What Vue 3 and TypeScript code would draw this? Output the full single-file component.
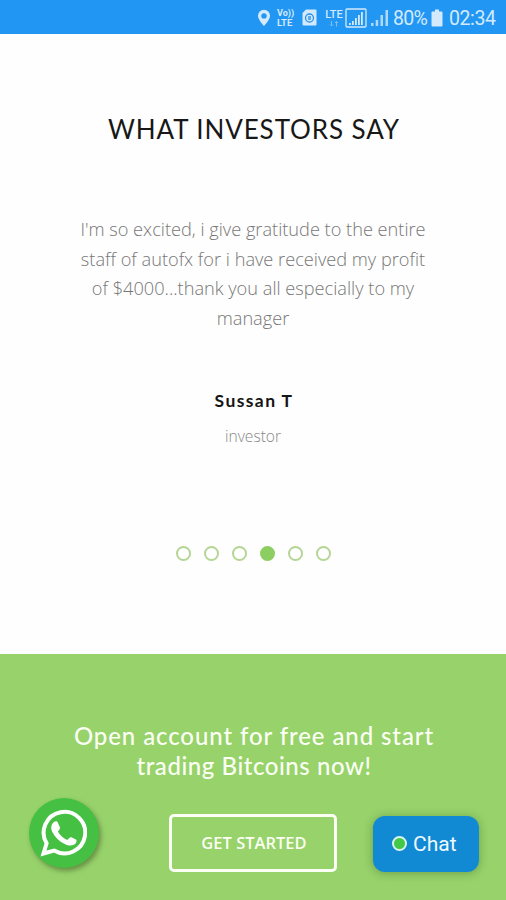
<script setup lang="ts">
import { ref } from 'vue'

interface Testimonial {
  lines: string[]
  name: string
  role: string
}

const testimonial: Testimonial = {
  lines: [
    "I'm so excited, i give gratitude to the entire",
    'staff of autofx for i have received my profit',
    'of $4000...thank you all especially to my',
    'manager',
  ],
  name: 'Sussan T',
  role: 'investor',
}

const slideCount = 6
const activeSlide = ref(4)
</script>

<template>
  <div class="screen">
    <header class="status">
      <svg class="pin" viewBox="0 0 14 18">
        <path fill-rule="evenodd" d="M7 .8A6 6 0 0 0 1 6.8C1 11 7 17 7 17s6-6 6-10.200A6 6 0 0 0 7 .8ZM7 4.200a2.700 2.700 0 1 1 0 5.400a2.700 2.700 0 0 1 0-5.400Z" />
      </svg>
      <div class="volte"><span>Vo))</span><span>LTE</span></div>
      <svg class="sim" viewBox="0 0 15 17">
        <path d="M4 .5h9.500a1 1 0 0 1 1 1v14a1 1 0 0 1-1 1h-12a1 1 0 0 1-1-1V4Z" />
        <circle cx="7.500" cy="9" r="4" fill="none" stroke="#2c91e8" stroke-width="1.300" />
        <path d="M6 7h3v4H6Z" fill="#5aabed" />
      </svg>
      <div class="lte">
        <span>LTE</span>
        <svg viewBox="0 0 10 6"><path d="M2.500 0v5M1 3.500L2.500 5L4 3.500M7.500 5.500v-5M6 2L7.500 .5L9 2" /></svg>
      </div>
      <svg class="boxed" viewBox="0 0 22 20">
        <rect x="1" y="1" width="20" height="18" rx="1" fill="none" stroke="#d3eafd" stroke-width="1.300" />
        <path d="M4 15h1.800v2H4ZM7 13h1.800v4H7ZM10 10h1.800v7H10ZM13 7h1.800v10H13ZM16 4h1.800v13H16Z" />
      </svg>
      <svg class="signal" viewBox="0 0 18 18">
        <path d="M0 14h2.500v3H0ZM4.700 11h2.500v6H4.700ZM9.500 6H12v11H9.500ZM14.500 1H17v16h-2.500Z" opacity=".8" />
      </svg>
      <span class="percent">80%</span>
      <svg class="battery" viewBox="0 0 12 18">
        <path d="M4 .5h4v2h2.500a1 1 0 0 1 1 1v13a1 1 0 0 1-1 1h-9a1 1 0 0 1-1-1v-13a1 1 0 0 1 1-1H4Z" />
      </svg>
      <span class="clock">02:34</span>
    </header>

    <section class="testimonials">
      <h2>WHAT INVESTORS SAY</h2>
      <blockquote>
        <span v-for="(line, i) in testimonial.lines" :key="i">{{ line }}</span>
      </blockquote>
      <p class="name">{{ testimonial.name }}</p>
      <p class="role">{{ testimonial.role }}</p>
      <nav class="dots">
        <button v-for="n in slideCount" :key="n" :class="{ active: n === activeSlide }" @click="activeSlide = n"></button>
      </nav>
    </section>

    <section class="cta">
      <h3><span>Open account for free and start</span><span class="second">trading Bitcoins now!</span></h3>
      <button class="start">GET STARTED</button>
    </section>

    <a class="whatsapp">
      <svg viewBox="0 0 48 48">
        <path d="M4.500 44.500L7.600 34.300A20.800 20.800 0 1 1 15 41.600Z" fill="none" stroke="#fff" stroke-width="4" stroke-linejoin="miter" />
        <path fill="#fff" d="M15.200 12.800C16.500 11.900 18.200 12 18.800 13.400L20.900 18.200C21.400 19.700 20 21.100 18.900 22.500C21 26.600 24.200 29.200 28.400 30.900C30 29.200 31 27.700 32.400 28.300L37 30.500C38.100 31.100 37.500 33.500 36.300 34.800C33.800 37.200 29.900 36.900 25.700 34.900C19.900 32.400 15.700 27.800 13.300 23C11.600 19.200 12 15.100 15.200 12.800Z" />
      </svg>
    </a>
    <button class="chat"><i></i><span>Chat</span></button>
  </div>
</template>

<style>
body {
  margin: 0;
  background: #fff;
}
</style>

<style scoped>
.screen {
  position: relative;
  display: flex;
  flex-direction: column;
  width: 506px;
  height: 900px;
  overflow: hidden;
  background: #fefefe;
  font-family: "Open Sans", sans-serif;
}
.status {
  box-sizing: border-box;
  display: flex;
  align-items: center;
  height: 34px;
  padding: 1px 0 0 257px;
  background: #2196f3;
  color: #d3eafd;
  font-family: Roboto, sans-serif;
  white-space: nowrap;
}
.status svg {
  flex: none;
  fill: #d3eafd;
}
.pin { width: 14px; height: 18px; }
.volte {
  display: flex;
  flex-direction: column;
  width: 18px;
  margin-left: 6px;
  font-size: 9px;
  line-height: 9px;
  font-weight: 700;
}
.volte span + span { font-size: 9.5px; }
.sim { width: 15px; height: 17px; margin-left: 7px; }
.lte {
  display: flex;
  flex-direction: column;
  align-items: center;
  width: 18px;
  margin-left: 8px;
  font-size: 11px;
  line-height: 12px;
  font-weight: 500;
}
.status .lte svg { width: 10px; height: 6px; fill: none; stroke: #d3eafd; opacity: .5; }
.boxed { width: 22px; height: 20px; margin-left: 2px; }
.signal { width: 18px; height: 18px; margin-left: 4px; }
.percent { width: 34px; margin-left: 4px; padding-top: 1px; font-size: 19.5px; letter-spacing: -.7px; }
.battery { width: 12px; height: 18px; margin-left: 4px; }
.clock { margin-left: 6px; padding-top: 1px; font-size: 19.5px; letter-spacing: -.4px; }

.testimonials {
  display: flex;
  flex-direction: column;
  align-items: center;
  box-sizing: border-box;
  height: 620px;
  padding-top: 79px;
  text-align: center;
  white-space: nowrap;
}
h2 {
  margin: 0;
  padding-left: 2px;
  color: #181818;
  font: 400 26px/32px Lato, sans-serif;
  letter-spacing: .9px;
}
blockquote {
  display: flex;
  flex-direction: column;
  align-items: center;
  margin: 70px 0 0;
  color: #777;
  font-size: 18.2px;
  font-weight: 300;
  line-height: 29.5px;
}
.name {
  margin: 56px 0 0;
  padding-left: 2px;
  color: #151515;
  font: 700 17.5px/24px Lato, sans-serif;
  letter-spacing: 1.4px;
}
.role {
  margin: 13px 0 0;
  color: #888;
  font-size: 15.6px;
  font-weight: 300;
  line-height: 20px;
}
.dots {
  display: flex;
  gap: 13.200px;
  margin: 100px 0 0 1px;
}
.dots button {
  box-sizing: border-box;
  width: 15px;
  height: 15px;
  padding: 0;
  border: 2px solid #b5d595;
  border-radius: 50%;
  background: #fff;
}
.dots .active { border-color: #8dce62; background: #8dce62; }

.cta {
  display: flex;
  flex: 1;
  flex-direction: column;
  align-items: center;
  box-sizing: border-box;
  padding-top: 67px;
  background: #97d26b;
  color: #fbfff4;
}
h3 {
  display: flex;
  flex-direction: column;
  align-items: center;
  margin: 0;
  padding-left: 2px;
  font: 500 24px/30px Lato, sans-serif;
  letter-spacing: .9px;
  white-space: nowrap;
}
.second { letter-spacing: .55px; }
.start {
  box-sizing: border-box;
  width: 168px;
  height: 58px;
  margin-top: 33px;
  padding: 0 0 1px 2px;
  border: 3px solid #fbfff4;
  border-radius: 5px;
  background: none;
  color: #fbfff4;
  font: 600 16.5px/24px "Open Sans", sans-serif;
}
.whatsapp {
  position: absolute;
  left: 29px;
  top: 798px;
  display: flex;
  align-items: center;
  justify-content: center;
  box-sizing: border-box;
  width: 70px;
  height: 70px;
  padding-right: 2px;
  border-radius: 50%;
  background: #45c043;
  box-shadow: 2px 3px 5px rgba(65, 90, 40, .55);
}
.whatsapp svg { width: 48px; height: 48px; }
.chat {
  position: absolute;
  left: 373px;
  top: 816px;
  display: flex;
  align-items: center;
  box-sizing: border-box;
  width: 106px;
  height: 56px;
  padding: 0 0 1px 19px;
  border: 0;
  border-radius: 12px;
  background: #1289d3;
  box-shadow: 0 1px 10px rgba(50, 80, 20, .4);
  color: #eef9ff;
  font: 400 21px/26px Roboto, sans-serif;
  white-space: nowrap;
}
.chat i {
  box-sizing: border-box;
  width: 15px;
  height: 15px;
  margin-right: 6px;
  border: 2px solid #d8f5ea;
  border-radius: 50%;
  background: #43c84a;
}
</style>
